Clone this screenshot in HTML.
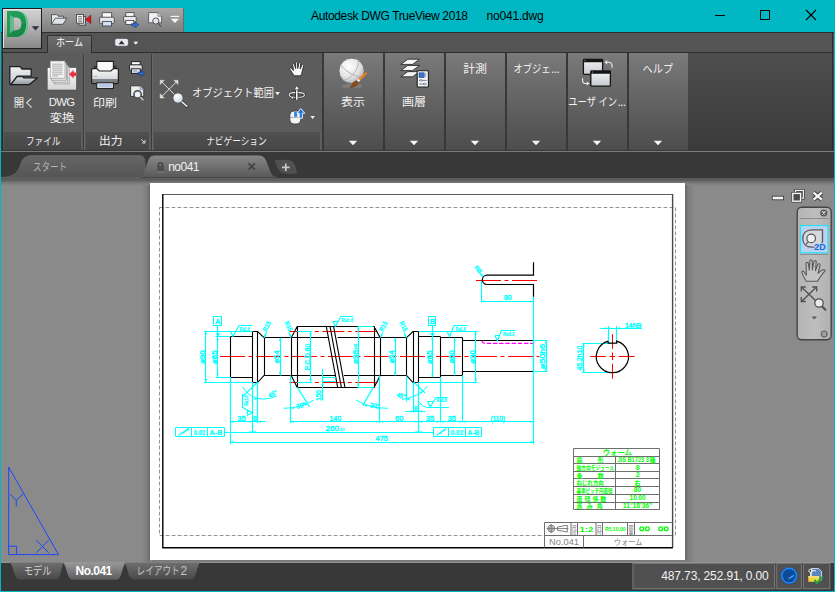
<!DOCTYPE html>
<html lang="ja"><head><meta charset="utf-8"><title>Autodesk DWG TrueView 2018 - no041.dwg</title>
<style>
html,body{margin:0;padding:0;}
body{width:835px;height:592px;position:relative;overflow:hidden;background:#00b7c3;font-family:"Liberation Sans",sans-serif;}
div{position:absolute;box-sizing:border-box;}
svg{position:absolute;overflow:visible;}
svg.ov{left:0;top:0;pointer-events:none;}
</style></head><body>
<div style="left:1px;top:32px;width:832.5px;height:558.5px;background:#3a3a3a;"></div>
<div style="left:1px;top:32px;width:832.5px;height:1px;background:#2e2e2e;"></div>
<div style="left:1px;top:33px;width:832.5px;height:19px;background:#545454;"></div>
<div style="left:1px;top:52px;width:832.5px;height:1px;background:#2c2c2c;"></div>
<div style="left:1px;top:53px;width:832.5px;height:97px;background:linear-gradient(#4e4e4e,#3a3a3a);"></div>
<div style="left:1px;top:150px;width:832.5px;height:1px;background:#3a3a3a;"></div>
<div style="left:1px;top:151px;width:832.5px;height:1px;background:#7a7a7a;"></div>
<div style="left:1px;top:152px;width:832.5px;height:3.5px;background:#383838;"></div>
<div style="left:311px;top:8px;height:16px;line-height:16px;font-size:12px;color:#000;letter-spacing:-0.355px;white-space:pre;">Autodesk DWG TrueView 2018</div>
<div style="left:486.4px;top:8px;height:16px;line-height:16px;font-size:12px;color:#000;letter-spacing:-0.165px;white-space:pre;">no041.dwg</div>
<svg style="left:700px;top:0" width="135" height="32" viewBox="700 0 135 32" fill="none" stroke="#000" stroke-width="1"><path d="M715 15.5H725"/><rect x="760.5" y="10.5" width="9" height="9"/><path d="M806 10L816 20M816 10L806 20" stroke-width="1.1"/></svg>
<div style="left:41.5px;top:8px;width:142px;height:24px;background:linear-gradient(#a9a9a9,#7d7d7d);border-right:1px solid #6a6a6a;"></div>
<div style="left:1.5px;top:8px;width:40.5px;height:40.5px;background:linear-gradient(180deg,#d2d2d2 0%,#c4c4c4 25%,#a8a8a8 60%,#888 100%);border:1px solid #1c1c1c;box-shadow:inset 1px 1px 0 #e6e6e6;"></div>
<svg style="left:0;top:0" width="200" height="56" viewBox="0 0 200 56"><defs><linearGradient id="dg" x1="0" y1="0" x2="1" y2="1"><stop offset="0" stop-color="#23a35a"/><stop offset="1" stop-color="#1b8a49"/></linearGradient></defs><path d="M7 11H15.500C23.500 11 28 16 28 24S23.500 37 15.500 37H7ZM13.400 17.600V30.400H15.200C19.400 30.400 21.400 28.400 21.400 24S19.400 17.600 15.200 17.600Z" fill="url(#dg)" fill-rule="evenodd"/><path d="M10 14.400L13.400 17.600V30.400L10 33.600Z" fill="#79c49a" fill-opacity=".75"/><path d="M7 37L13.400 30.400H15.200C19.400 30.400 21.400 28.400 21.400 24L28 24C28 32 23.500 37 15.500 37Z" fill="#17803f" fill-opacity=".55"/><path d="M17 11.100C24.500 11.600 28 16.400 28 24S24.500 36.400 17 36.900C23 36 26.200 31.500 26.200 24S23 12 17 11.100Z" fill="#63cf96"/><path d="M31.7 26.2H39.3L35.5 30.6Z" fill="#2a3140"/><g stroke="#3c3c3c" stroke-width=".8"><path d="M51.5 24.3V14.6H56.5L58 16.2H63.6V18.2" fill="#e9e9ee"/><path d="M51.5 24.3L55.2 18.2H66.8L63 24.3Z" fill="#dfe3ea"/></g><g stroke="#3a3a3a" stroke-width=".8"><rect x="79" y="16.6" width="6.6" height="8.6" fill="#d8d8d8"/><rect x="76.6" y="14.4" width="6.8" height="8.8" fill="#f4f4f4"/></g><path d="M78 16.5H82M78 18.3H82M78 20.1H82M78 21.7H82" stroke="#555" stroke-width=".7"/><path d="M85.6 19.4L90.8 15.2V23.6Z" fill="#e0161c" stroke="#7a0c10" stroke-width=".6"/><g stroke="#3c3c3c" stroke-width=".8"><path d="M102.2 17.4V12.6H111.6V17.4" fill="#fafafa"/><rect x="99.6" y="17.2" width="14.6" height="6.2" rx="1.2" fill="#e4e6ea"/><rect x="102.4" y="21.4" width="9" height="4.6" fill="#cfe0f6"/></g><g stroke="#3c3c3c" stroke-width=".8"><path d="M125.8 16.6V12.6H134V16.6" fill="#fafafa"/><rect x="123.6" y="16.4" width="12.6" height="5.6" rx="1.1" fill="#e4e6ea"/><rect x="125.8" y="20.4" width="8" height="4" fill="#f4f4f4"/></g><path d="M131.6 23.6H135V21.8L139 24.8L135 27.8V26H131.6Z" fill="#2f6fd0" stroke="#183a78" stroke-width=".5"/><path d="M148.6 12.6H158L161.6 16.2V22.8H148.6Z" fill="#f0f0f0" stroke="#4a4a4a" stroke-width=".8"/><path d="M158 12.6V16.2H161.6" fill="#cfd8e6" stroke="#4a4a4a" stroke-width=".6"/><circle cx="155.8" cy="21" r="3.1" fill="#dfe6ee" stroke="#555" stroke-width="1"/><path d="M158 23.4L161.2 26.8" stroke="#555" stroke-width="1.3"/><path d="M170.6 16.4H179.2" stroke="#f4f4f4" stroke-width="1.2"/><path d="M170.8 18.8H179L174.9 23Z" fill="#f6f6f6"/></svg>
<div style="left:47.2px;top:35.2px;width:45px;height:17.8px;background:linear-gradient(#6b6b6b,#5d5d5d);border:1px solid #303030;border-bottom:none;border-radius:1.5px 1.5px 0 0;"></div>
<svg style="left:110px;top:34px" width="34" height="16" viewBox="110 34 34 16"><rect x="114.8" y="38.4" width="13.6" height="7.8" rx="2.2" fill="#e9e9ef" stroke="#3a3f4c" stroke-width=".6"/><path d="M118.6 44.2L121.6 40.6L124.6 44.2Z" fill="#2a3140"/><path d="M133.4 41.8H138.2L135.8 44.8Z" fill="#f4f4f4"/></svg>
<div style="left:1.5px;top:48.5px;width:1.5px;height:102px;background:#2a2a2a;"></div>
<div style="left:3px;top:53px;width:319px;height:97px;background:#5c5c5c;"></div>
<div style="left:3px;top:132px;width:79.3px;height:17.7px;background:linear-gradient(#505050,#474747);border-left:1px solid #565656;border-right:1px solid #5e5e5e;"></div>
<div style="left:85.3px;top:132px;width:64.7px;height:17.7px;background:linear-gradient(#505050,#474747);border-left:1px solid #565656;border-right:1px solid #5e5e5e;"></div>
<div style="left:153px;top:132px;width:168px;height:17.7px;background:linear-gradient(#505050,#474747);border-left:1px solid #565656;border-right:1px solid #5e5e5e;"></div>
<div style="left:3px;top:149.7px;width:319px;height:0.8px;background:#3a3a3a;"></div>
<div style="left:83.3px;top:54px;width:1px;height:96px;background:#3a3a3a;"></div>
<div style="left:84.3px;top:54px;width:1px;height:96px;background:#686868;"></div>
<div style="left:151px;top:54px;width:1px;height:96px;background:#3a3a3a;"></div>
<div style="left:152px;top:54px;width:1px;height:96px;background:#686868;"></div>
<div style="left:322px;top:53px;width:366px;height:97px;background:#383838;"></div>
<div style="left:48.8px;top:95.15px;height:15.3px;line-height:15.3px;font-size:11.3px;color:#f2f2f2;letter-spacing:-0.708px;white-space:pre;">DWG</div>
<div style="left:324px;top:53px;width:58.5px;height:96.5px;background:linear-gradient(#7a7a7a,#656565 45%,#4d4d4d);"></div>
<svg style="left:348.2px;top:140px" width="10" height="6" viewBox="0 0 10 6"><path d="M0.8 0.8H9.2L5 5.2Z" fill="#f4f4f4"/></svg>
<div style="left:385px;top:53px;width:58.5px;height:96.5px;background:linear-gradient(#7a7a7a,#656565 45%,#4d4d4d);"></div>
<svg style="left:409.2px;top:140px" width="10" height="6" viewBox="0 0 10 6"><path d="M0.8 0.8H9.2L5 5.2Z" fill="#f4f4f4"/></svg>
<div style="left:446px;top:53px;width:58.5px;height:96.5px;background:linear-gradient(#7a7a7a,#656565 45%,#4d4d4d);"></div>
<svg style="left:470.2px;top:140px" width="10" height="6" viewBox="0 0 10 6"><path d="M0.8 0.8H9.2L5 5.2Z" fill="#f4f4f4"/></svg>
<div style="left:507px;top:53px;width:58.5px;height:96.5px;background:linear-gradient(#7a7a7a,#656565 45%,#4d4d4d);"></div>
<svg style="left:531.2px;top:140px" width="10" height="6" viewBox="0 0 10 6"><path d="M0.8 0.8H9.2L5 5.2Z" fill="#f4f4f4"/></svg>
<div style="left:568px;top:53px;width:58.5px;height:96.5px;background:linear-gradient(#7a7a7a,#656565 45%,#4d4d4d);"></div>
<svg style="left:592.2px;top:140px" width="10" height="6" viewBox="0 0 10 6"><path d="M0.8 0.8H9.2L5 5.2Z" fill="#f4f4f4"/></svg>
<div style="left:629px;top:53px;width:58.5px;height:96.5px;background:linear-gradient(#7a7a7a,#656565 45%,#4d4d4d);"></div>
<svg style="left:653.2px;top:140px" width="10" height="6" viewBox="0 0 10 6"><path d="M0.8 0.8H9.2L5 5.2Z" fill="#f4f4f4"/></svg>
<div style="left:551px;top:62px;font-size:12px;line-height:14px;color:#f2f2f2;letter-spacing:-0.6px;">...</div>
<div style="left:617.4px;top:94.6px;font-size:12px;line-height:14px;color:#f2f2f2;letter-spacing:-0.6px;">...</div>
<div style="left:832.3px;top:32px;width:1.2px;height:119px;background:#2a2a2a;"></div>
<svg class="ov" width="835" height="592" viewBox="0 0 835 592"><defs><linearGradient id="fo1" x1="0" y1="0" x2="0" y2="1"><stop offset="0" stop-color="#f0f1f4"/><stop offset="1" stop-color="#c4c8ce"/></linearGradient><linearGradient id="fo2" x1="0" y1="0" x2="0" y2="1"><stop offset="0" stop-color="#dfe2e7"/><stop offset="1" stop-color="#8f969f"/></linearGradient><linearGradient id="wp" x1="0" y1="0" x2="0" y2="1"><stop offset="0" stop-color="#ffffff"/><stop offset="1" stop-color="#d4d4d6"/></linearGradient><linearGradient id="pr1" x1="0" y1="0" x2="0" y2="1"><stop offset="0" stop-color="#fbfbfc"/><stop offset=".68" stop-color="#d6d8dc"/><stop offset=".7" stop-color="#7f8790"/><stop offset="1" stop-color="#6e7680"/></linearGradient><radialGradient id="gl" cx=".38" cy=".32" r=".75"><stop offset="0" stop-color="#ffffff"/><stop offset=".6" stop-color="#e2e2e2"/><stop offset="1" stop-color="#a8a8a8"/></radialGradient><linearGradient id="win" x1="0" y1="0" x2="0" y2="1"><stop offset="0" stop-color="#f2f3f6"/><stop offset="1" stop-color="#c6c9cf"/></linearGradient><radialGradient id="mg" cx=".4" cy=".35" r=".7"><stop offset="0" stop-color="#ffffff"/><stop offset="1" stop-color="#c9d2e2"/></radialGradient></defs><g stroke="#1e1e1e" stroke-width="1.3" stroke-linejoin="round"><path d="M9.800 84.200V66.600H20.200L21.800 69H31.200V76.200H17.400L10.800 84.600Z" fill="url(#fo1)"/><path d="M10.800 84.600L17 76.600H22.600L23.800 77.800H37.600L29.400 84.600Z" fill="url(#fo2)"/></g><rect x="47.200" y="67.600" width="29.200" height="22.400" fill="url(#wp)" stroke="#3c3c3c" stroke-width=".5"/><g fill="#e6e6e6" stroke="#8a8a8a" stroke-width=".6"><rect x="54.400" y="66.800" width="14.800" height="17.200"/><rect x="53" y="65" width="14.800" height="17.200"/><rect x="51.600" y="63" width="14.800" height="17.200"/><rect x="50.200" y="61" width="14.800" height="17.200" fill="#f2f2f2"/></g><path d="M52.200 64.200H62.600M52.200 66.200H62.600M52.200 68.200H62.600M52.200 70.200H62.600M52.200 72.200H62.600M52.200 74.200H62.600M52.200 76H58" stroke="#9a9a9a" stroke-width=".8"/><path d="M69.200 74.200L73.600 69.800V72.400H76.300V76H73.600V78.600Z" fill="#e8303a" stroke="#f08088" stroke-width=".4"/><path d="M94.200 70V66.400H96.600V70M113.500 70V66.400H116V70" fill="#3a3a3a" stroke="#2a2a2a" stroke-width=".8"/><rect x="91.600" y="68.600" width="26.800" height="15" rx="1.600" fill="url(#pr1)" stroke="#1e1e1e" stroke-width="1.200"/><path d="M96.800 68.600V61.400H113.400V68.600L110.800 71H99.400Z" fill="#fafafa" stroke="#1e1e1e" stroke-width="1.100" stroke-linejoin="round"/><path d="M94 76.500H97" stroke="#9aa0a8" stroke-width=".8"/><rect x="96.800" y="82.800" width="16.600" height="5.600" fill="#fafafa" stroke="#1e1e1e" stroke-width="1.100"/><rect x="98.400" y="84" width="13.400" height="3" fill="#b4c8ea"/><g stroke="#1e1e1e" stroke-width="1"><path d="M131.400 65V61.600H140.200V65" fill="#fafafa"/><rect x="129.400" y="64.800" width="12.800" height="5.400" rx="1" fill="#e4e6ea"/><rect x="131.400" y="68.800" width="8.800" height="4.600" fill="#f4f6fa"/></g><rect x="132.600" y="70" width="5" height="2.400" fill="#a8bcd8"/><path d="M138 72.200H141V70.100L144.800 73.400L141 76.800V74.700H138Z" fill="#2e66c0" stroke="#17386e" stroke-width=".6"/><path d="M130.600 85.800H140L143.800 89.400V96.400H130.600Z" fill="#ececec" stroke="#3a3a3a" stroke-width="1"/><path d="M140 85.800V89.400H143.800Z" fill="#c6d4ea" stroke="#6a7a94" stroke-width=".6"/><circle cx="137.600" cy="94.400" r="3.700" fill="#dde4ec" stroke="#4a4a4a" stroke-width="1.500"/><circle cx="137.600" cy="94.400" r="2.400" fill="#eef2f6"/><path d="M140.400 97.200L143.400 100.200" stroke="#c8c8c8" stroke-width="1.400"/><path d="M141.200 139.200L145 143M145 140V143H142" fill="none" stroke="#d8d8d8" stroke-width="1"/><g stroke="#dcdcdc" stroke-width="1" fill="#dcdcdc"><path d="M160.600 80.800L176 96M177.600 80.800L160.600 97.600" fill="none"/><path d="M160.100 80.300H164.300L160.100 84.500ZM178 80.300V84.500L173.800 80.300ZM160.100 98V93.800L164.300 98Z" stroke-width=".5"/></g><path d="M181.600 101.600L187 106.400" stroke="#3a3a3a" stroke-width="3.200" stroke-linecap="round"/><path d="M181.600 101.600L186.800 106.200" stroke="#e6e6e6" stroke-width="1.700" stroke-linecap="round"/><circle cx="178" cy="98" r="5.200" fill="url(#mg)" stroke="#4e525a" stroke-width="1"/><path d="M275.100 92H279.900L277.500 95.200ZM310.300 116H314.900L312.600 118.900Z" fill="#f0f0f0"/><path d="M294.200 75.800C292.600 73.400 291 71 289.900 69.200C289.300 68.200 290.700 67.400 291.500 68.300L293.600 70.600L292.600 64.300C292.400 63.100 294.100 62.800 294.400 64L295.700 68.600L295.600 62.600C295.600 61.400 297.300 61.400 297.400 62.600L297.800 68.400L298.900 62.900C299.100 61.700 300.800 62 300.700 63.200L300.200 68.900L302 64.800C302.500 63.700 304 64.300 303.700 65.500L302.300 71C302 73 301.400 74.600 300.600 75.800Z" fill="#fafafa" stroke="#2a2a2a" stroke-width=".9" stroke-linejoin="round"/><ellipse cx="296.800" cy="94.900" rx="7.600" ry="2.500" fill="none" stroke="#2a2a2a" stroke-width="2.200"/><ellipse cx="296.800" cy="94.900" rx="7.600" ry="2.500" fill="none" stroke="#f2f2f2" stroke-width="1.100"/><path d="M296.800 100V89" stroke="#2a2a2a" stroke-width="3"/><path d="M296.800 99.800V89" stroke="#fafafa" stroke-width="1.600"/><path d="M296.800 85.600L299.600 89.800H294Z" fill="#fafafa" stroke="#2a2a2a" stroke-width=".7"/><path d="M290.400 97.600L293.800 95.600L293.400 99.400Z" fill="#fafafa" stroke="#2a2a2a" stroke-width=".6"/><rect x="289.800" y="111" width="11" height="13" rx="4" fill="#f2f3f6" stroke="#3a3a3a" stroke-width=".9"/><path d="M289.800 117.400H300.800M295.300 111V117.400" stroke="#8a8e96" stroke-width=".7"/><rect x="294.200" y="112" width="3" height="4.600" fill="#2a7fe0"/><path d="M300.800 108.600L304.800 113.200H302.400V118.300H299.200V113.200H296.800Z" fill="#1d7be0" stroke="#f4f8ff" stroke-width=".9" stroke-linejoin="round"/><ellipse cx="352" cy="86" rx="10.500" ry="2.600" fill="#8a8a8a" fill-opacity=".55"/><circle cx="351.600" cy="70.800" r="12.700" fill="url(#gl)" stroke="#6e6e6e" stroke-width="1"/><path d="M340.500 64.600C346 72 356 78 363.400 76.500M358.500 60.300C359.500 68 352 78.500 343.600 80.500" fill="none" stroke="#b4b4b4" stroke-width="1"/><path d="M367.300 73.200L366 71.900L358.600 78.800L360.200 80.400Z" fill="#f08a24" stroke="#b86214" stroke-width=".5"/><path d="M360.200 80.400L358.600 78.800L356.600 80.600L358.300 82.300Z" fill="#f4f4f4" stroke="#9a9a9a" stroke-width=".4"/><path d="M358.300 82.300L356.600 80.600C354.200 81.200 352.400 83 351.800 85.400C351.400 86.600 350.600 87 349.800 87.200C353.400 88 357.400 86.200 358.300 82.300Z" fill="#8c4a1c" stroke="#5e3010" stroke-width=".4"/><g stroke="#2a2a2a" stroke-width=".9" stroke-linejoin="round"><path d="M400.800 76.800L407.800 71.600H419.600L412.600 76.800Z" fill="#f2f2f2"/><path d="M400.800 70.600L407.800 65.400H419.600L412.600 70.600Z" fill="#f6f6f6"/><path d="M400.800 64.400L407.800 59.200H419.600L412.600 64.400Z" fill="#fafafa"/></g><rect x="417.200" y="70.800" width="11.200" height="16.200" rx=".8" fill="#f6f6f8" stroke="#1e1e1e" stroke-width="1.100"/><rect x="419" y="72.800" width="5.200" height="4.800" fill="#3a72d0" stroke="#1d3f86" stroke-width=".5"/><path d="M425.600 72.800V77.600" stroke="#b0b4bc" stroke-width="1.200"/><path d="M419 80.400H426.600M419 84H426.600" stroke="#3a4a66" stroke-width=".7"/><circle cx="421" cy="80.400" r="1" fill="#f6f6f8" stroke="#3a4a66" stroke-width=".5"/><circle cx="424.400" cy="84" r="1" fill="#f6f6f8" stroke="#3a4a66" stroke-width=".5"/><g stroke="#151515" stroke-width="1.300" stroke-linejoin="round"><rect x="583.400" y="59.400" width="19.200" height="15" rx=".8" fill="url(#win)"/><rect x="590.800" y="71" width="19.600" height="15.200" rx=".8" fill="url(#win)"/></g><path d="M583.400 59.400H602.600V62.200H583.400ZM590.800 71H610.400V73.800H590.800Z" fill="#151515"/><path d="M584.600 60.500H585.400M592 72.100H592.800" stroke="#eee" stroke-width=".8"/><g fill="none" stroke="#ececec" stroke-width="1.100"><path d="M612 67.800V65.500C612 63.400 610.600 62.300 608.600 62.300H605.600"/><path d="M582.600 78.200V80.400C582.600 82.400 584 83.500 586 83.500H588.400"/></g><path d="M604.400 62.300L607.200 60.200V64.400ZM589.600 83.500L586.800 81.400V85.600Z" fill="#ececec"/></svg>
<div style="left:1px;top:155.5px;width:832.5px;height:22px;background:#383838;"></div>
<svg style="left:0;top:150px" width="835" height="36" viewBox="0 150 835 36"><defs><linearGradient id="tg1" x1="0" y1="0" x2="0" y2="1"><stop offset="0" stop-color="#666"/><stop offset="1" stop-color="#555"/></linearGradient><linearGradient id="tg2" x1="0" y1="0" x2="0" y2="1"><stop offset="0" stop-color="#888"/><stop offset="1" stop-color="#585858"/></linearGradient></defs><path d="M132 177.500C141 177.500 144 172 146.300 166S149 155.500 154.500 155.500H258C266 155.500 266.500 162 269 168S272 177.500 280 177.500Z" fill="url(#tg2)"/><path d="M1 177.500C14 177.500 18 172 20 166S24 155.500 32 155.500H139Q145 155.500 145 161.500V171.500Q145 177.500 139 177.500Z" fill="url(#tg1)" stroke="#686868" stroke-width=".7"/><path d="M274.600 160C279 159.600 287 159.400 290.500 160.500S296.500 167 297 173.600C292 174 283 174 280.500 172S276.500 165 274.600 160Z" fill="#505050"/><path d="M282 167.300H289.600M285.800 163.500V171.100" stroke="#c8c8c8" stroke-width="1.700"/><path d="M248.600 163.400L254.800 169.600M254.800 163.400L248.600 169.600" stroke="#444" stroke-width="1.800"/><path d="M158.400 166V164.400C158.400 162.400 162.600 162.400 162.600 164.400V166" fill="none" stroke="#3e3e3e" stroke-width="1.300"/><rect x="157.200" y="165.800" width="6.600" height="5.600" fill="#4e4e4e"/><path d="M157 172H164" stroke="#9a9a9a" stroke-width=".6"/></svg>
<div style="left:1px;top:177.5px;width:832.5px;height:3.6px;background:linear-gradient(#5a5a5a,#606060);"></div>
<div style="left:1px;top:181.1px;width:832.5px;height:1px;background:#6c6c6c;"></div>
<div style="left:168.2px;top:158.6px;height:16px;line-height:16px;font-size:12px;color:#f0f0f0;letter-spacing:-0.518px;white-space:pre;">no041</div>
<div style="left:1px;top:182px;width:832.5px;height:380px;background:linear-gradient(#747474,#8a8a8a 4px);"></div>
<div style="left:685px;top:185px;width:10px;height:376.6px;background:linear-gradient(90deg,#686868,#7e7e7e 35%,#8a8a8a);"></div>
<div style="left:152px;top:560px;width:536px;height:1.6px;background:#7c7c7c;"></div>
<div style="left:140.5px;top:185px;width:9.5px;height:376.6px;background:linear-gradient(90deg,#8a8a8a,#7e7e7e 65%,#686868);"></div>
<div style="left:150px;top:183px;width:535px;height:377px;background:#fff;"></div>
<svg class="ov" width="835" height="592" viewBox="0 0 835 592" font-family="Liberation Sans, sans-serif"><path d="M8.7 467.1V554.6H58.5ZM8.7 546.2H16.6V554.6M10 494L16.3 500.1L23.7 493.5M16.3 500.1V506.4M36.4 540.1L48.7 552.8M48.7 540.1L36.4 552.8" fill="none" stroke="#1846ff" stroke-width="1"/><g fill="none" stroke="#ff0000" stroke-width="1"><path d="M220 356.5H539.5M476 280.5H538.7" stroke-dasharray="25 3.5 4 3.5"/><path d="M289.3 331.5H380.2M289.3 382.5H380.2" stroke-dasharray="22 3.5 4 3.5"/><path d="M590.1 356.5H634.7" stroke-dasharray="15.8 3.6 5.6 3.6 16 0"/><path d="M612.5 334.1V378.8" stroke-dasharray="14.8 3.6 7.5 3.6 16 0"/></g><path d="M252.6 336.5L230.5 336.5L230.5 377.5L252.6 377.5M252.5 331.2L252.5 382.2M257.5 331.2L257.5 382.2M252.6 331.5L257.6 331.5L264.1 337.7M252.6 382.5L257.6 382.5L264.1 375.4M264.5 337.7L264.5 375.4M264.1 337.5L291.2 337.5M264.1 375.5L291.2 375.5M291.5 337.7L291.5 375.4M291.2 337.7L297.2 326.5L374.1 326.5L380.2 337.7M291.2 375.4L297.2 387.5L374.1 387.5L380.2 375.4M380.5 337.7L380.5 375.4M297.5 326.3L297.5 387.1M374.5 326.3L374.5 387.1M291.2 337.5L329 337.5M337.6 337.5L380.2 337.5M291.2 375.5L335.4 375.5M344 375.5L380.2 375.5M326.3 326.3L337.6 387.1M330 326.3L341.3 387.1M333.6 326.3L344.9 387.1M380.2 337.5L406.5 337.5L406.5 375.5L380.2 375.5M406.5 337.7L413 331.5L418.7 331.5M406.5 375.4L413 382.5L418.7 382.5M413.5 331.2L413.5 382.2M418.5 331.2L418.5 382.2M418.7 336.5L440.3 336.5M418.7 377.5L440.3 377.5M440.5 336.6L440.5 377.2M440.3 337.5L462.6 337.5M440.3 375.5L462.6 375.5M462.5 337.7L462.5 375.4M462.6 340.5L533.5 340.5L533.5 371.5L462.6 371.5" fill="none" stroke="#000" stroke-width="1.1"/><path d="M482 340.5Q482.4 343.3 485.2 343.3H532.8" fill="none" stroke="#ff00ff" stroke-width="1.25" stroke-dasharray="4.4 1.8"/><path d="M217.5 325.9L217.5 336.6M204 331.5L252.6 331.5M204 382.5L252.6 382.5M215.7 336.5L230.4 336.5M215.7 377.5L230.4 377.5M205.5 331.2L205.5 382.2M217.5 336.6L217.5 377.2M230.5 331.5L235.5 331.5M230.5 331.6L233 336.6L239 325.5L252.2 325.5M264.1 337.7L266.6 332.3M291.2 337.7L288.7 332.3M380.2 337.7L382.9 332.4M406.5 337.7L403.8 332.4M280.5 337.7L280.5 375.4M297.2 331.5L312.3 331.5M297.2 382.5L312.3 382.5M310.5 331.2L310.5 382.2M357.6 326.5L373.4 326.5M357.6 387.5L373.4 387.5M358.5 326.3L358.5 387.1M332.8 321.5L337.8 321.5M332.8 321.3L335.3 326.3L341 316.5L353.3 316.5M395.5 337.7L395.5 375.4M322.5 369L322.5 400.6M322.4 377.5L336 377.5M323 381.5L335.6 381.5M432.5 325.9L432.5 336.6M432.5 336.6L432.5 377.2M418.7 331.5L477.7 331.5M418.7 382.5L477.7 382.5M475.5 331.2L475.5 382M454.5 337.7L454.5 375.4M447.1 331.5L452.1 331.5M447.1 331.6L449.6 336.6L454 325.5L467.6 325.5M494.9 335.5L499.9 335.5M494.9 335.5L497.4 340.5L501.4 330.5L515.5 330.5M533.4 340.5L547.4 340.5M533.4 371.5L547.4 371.5M546.5 340.3L546.5 371.9M230.5 377.2L230.5 444.3M252.5 382.2L252.5 432.5M257.5 382.2L257.5 423M290.5 375.4L290.5 423.1M379.5 375.4L379.5 423M418.5 382.2L418.5 432.5M440.5 377.2L440.5 422.6M462.5 375.4L462.5 422.6M533.5 296.7L533.5 444.3M413.5 382.2L413.5 412.4M406.5 375.4L406.5 401.6M230.4 421.5L252.6 421.5M252.6 421.5L265.6 421.5M290.6 421.5L379.8 421.5M379.8 421.5L418.7 421.5M418.7 421.5L440.3 421.5M440.3 421.5L462.6 421.5M462.6 421.5L533.5 421.5M224.9 432.5L433.1 432.5M230.4 442.5L533.5 442.5M178.5 435.2L189.1 428.6M436.5 435.2L446.1 428.6M405.1 411.5L425.2 411.5M257.9 381.8L242.6 396.6M247.5 410.2L247.5 415.2L252.6 412.7L247.6 410.2L242.5 407.3L242.5 393.7M297.2 387.1L309.5 406.6M373.4 387.1L362.6 405.9M413.7 382.2L425.2 393M426.6 407.5L448.9 407.5M427.4 401.5L433.1 401.5M427.4 401.6L430.2 407L436 397.5L447.5 397.5M481.5 281L481.5 302.5M481.5 301.5L533.5 301.5M477.5 270.3L483.6 277.4M608.5 325.9L608.5 342.4M616.5 325.9L616.5 342.4M600.2 328.5L641.9 328.5M582.2 343.5L611.7 343.5M582.2 372.5L611.7 372.5M583.5 343.1L583.5 372.4" fill="none" stroke="#00ffff" stroke-width="1.15"/><path d="M218 336.6L215.7 333.2L220.3 333.2ZM205.9 331.2L207.1 334.6L204.8 334.6ZM205.9 382.2L204.8 378.8L207.1 378.8ZM217.7 336.6L218.8 340L216.5 340ZM217.7 377.2L216.5 373.8L218.8 373.8ZM264.1 337.7L264.6 334.2L266.4 335ZM291.2 337.7L288.9 335L290.7 334.2ZM380.2 337.7L380.9 334.2L382.6 335.1ZM406.5 337.7L404.1 335.1L405.8 334.2ZM280 337.7L281.1 341.1L278.9 341.1ZM280 375.4L278.9 372L281.1 372ZM310.6 331.2L311.8 334.6L309.5 334.6ZM310.6 382.2L309.5 378.8L311.8 378.8ZM358.3 326.3L359.4 329.7L357.2 329.7ZM358.3 387.1L357.2 383.7L359.4 383.7ZM395 337.7L396.1 341.1L393.9 341.1ZM395 375.4L393.9 372L396.1 372ZM322.4 387.1L321.3 383.9L323.4 383.9ZM432.5 336.6L429.9 333.2L435.1 333.2ZM432.4 336.6L433.5 340L431.2 340ZM432.4 377.2L431.2 373.8L433.5 373.8ZM475.8 331.2L476.9 334.6L474.7 334.6ZM475.8 382L474.7 378.6L476.9 378.6ZM454.7 337.7L455.8 341.1L453.6 341.1ZM454.7 375.4L453.6 372L455.8 372ZM546 340.3L547.1 343.7L544.9 343.7ZM546 371.9L544.9 368.5L547.1 368.5ZM230.4 421.7L233.8 420.6L233.8 422.8ZM252.6 421.7L249.2 422.8L249.2 420.6ZM257.7 421.7L261.1 420.6L261.1 422.8ZM290.6 421.7L294 420.6L294 422.8ZM379.8 421.7L376.4 422.8L376.4 420.6ZM379.8 421.7L383.2 420.6L383.2 422.8ZM418.7 421.7L415.3 422.8L415.3 420.6ZM418.7 421.7L422.1 420.6L422.1 422.8ZM440.3 421.7L436.9 422.8L436.9 420.6ZM440.3 421.7L443.7 420.6L443.7 422.8ZM462.6 421.7L459.2 422.8L459.2 420.6ZM462.6 421.7L466 420.6L466 422.8ZM533.5 421.7L530.1 422.8L530.1 420.6ZM252.6 432L249.4 433.1L249.4 430.9ZM252.6 432L255.8 430.9L255.8 433.1ZM418.7 432L415.5 433.1L415.5 430.9ZM418.7 432L421.9 430.9L421.9 433.1ZM230.4 442.1L233.8 441L233.8 443.2ZM533.5 442.1L530.1 443.2L530.1 441ZM189.1 428.6L186.9 431.7L185.6 429.9ZM185.9 431L183.7 434.1L182.4 432.3ZM446.1 428.6L443.9 431.7L442.6 429.9ZM442.9 431L440.7 434.1L439.4 432.3ZM413.3 411.4L410.1 412.4L410.1 410.3ZM418.7 411.4L421.9 410.3L421.9 412.4ZM257.7 399L254.5 400.1L254.5 397.9ZM290.6 408.1L293.8 407.1L293.8 409.2ZM308 403.6L305.8 406.1L304.7 404.3ZM364 404.4L367.3 405.1L366.2 406.9ZM379.8 408.1L376.6 409.2L376.6 407.1ZM406.5 398.8L409.8 398.3L409.5 400.4ZM423 391L421.5 394L420 392.5ZM481.5 301.3L484.9 300.2L484.9 302.4ZM533.5 301.3L530.1 302.4L530.1 300.2ZM483.6 277.4L480.4 275.4L482.1 274ZM608.1 328.3L604.9 329.4L604.9 327.2ZM616.7 328.3L619.9 327.2L619.9 329.4ZM583.7 343.1L584.9 346.5L582.6 346.5ZM583.7 372.4L582.6 369L584.9 369Z" fill="#00ffff"/><rect x="159.5" y="207.5" width="516" height="328" fill="none" stroke="#929292" stroke-width="1" stroke-dasharray="3.8 2.2"/><path d="M162.8 194.5H672.5" fill="none" stroke="#5c5c5c" stroke-width="1"/><path d="M672.6 194V547.7" fill="none" stroke="#4a4a4a" stroke-width="1.4"/><path d="M162.8 194.1V547.7H672.8" fill="none" stroke="#000" stroke-width="1.4"/><rect x="213.5" y="316.5" width="8" height="9" fill="none" stroke="#00ffff"/><text transform="translate(217.6 323.8)" text-anchor="middle" font-size="7.2" fill="#00ffff" stroke="#00ffff" stroke-width="0.4">A</text><text transform="translate(204.9 357) rotate(-90)" text-anchor="middle" font-size="6.3" fill="#00ffff" stroke="#00ffff" stroke-width="0.4" textLength="13.5" lengthAdjust="spacingAndGlyphs">ø90</text><text transform="translate(216.7 357.2) rotate(-90)" text-anchor="middle" font-size="6.3" fill="#00ffff" stroke="#00ffff" stroke-width="0.4" textLength="13.5" lengthAdjust="spacingAndGlyphs">ø65</text><text transform="translate(244.8 331)" text-anchor="middle" font-size="6.2" fill="#00ffff" stroke="#00ffff" stroke-width="0.2" font-weight="bold" textLength="10.4" lengthAdjust="spacingAndGlyphs">Ra1.6</text><text transform="translate(268.8 327.2) rotate(-65)" text-anchor="middle" font-size="6.6" fill="#00ffff" stroke="#00ffff" stroke-width="0.2" font-weight="bold" textLength="10.5" lengthAdjust="spacingAndGlyphs">R15</text><text transform="translate(286.5 327.2) rotate(65)" text-anchor="middle" font-size="6.6" fill="#00ffff" stroke="#00ffff" stroke-width="0.2" font-weight="bold" textLength="10.5" lengthAdjust="spacingAndGlyphs">R15</text><text transform="translate(385.2 327.4) rotate(-63)" text-anchor="middle" font-size="6.6" fill="#00ffff" stroke="#00ffff" stroke-width="0.2" font-weight="bold" textLength="10.5" lengthAdjust="spacingAndGlyphs">R15</text><text transform="translate(401.5 327.4) rotate(63)" text-anchor="middle" font-size="6.6" fill="#00ffff" stroke="#00ffff" stroke-width="0.2" font-weight="bold" textLength="10.5" lengthAdjust="spacingAndGlyphs">R15</text><text transform="translate(278.9 356.8) rotate(-90)" text-anchor="middle" font-size="6.3" fill="#00ffff" stroke="#00ffff" stroke-width="0.4" textLength="13" lengthAdjust="spacingAndGlyphs">ø54</text><text transform="translate(309.6 357) rotate(-90)" text-anchor="middle" font-size="6.4" fill="#00ffff" stroke="#00ffff" stroke-width="0.4" textLength="26.5" lengthAdjust="spacingAndGlyphs">P.C.D.80</text><text transform="translate(357.7 357) rotate(-90)" text-anchor="middle" font-size="6.3" fill="#00ffff" stroke="#00ffff" stroke-width="0.4" textLength="14" lengthAdjust="spacingAndGlyphs">ø96</text><text transform="translate(357.2 346.8) rotate(-90)" text-anchor="middle" font-size="3.6" fill="#00ffff" stroke="#00ffff" stroke-width="0.4" textLength="6" lengthAdjust="spacingAndGlyphs">-0.05</text><text transform="translate(347.3 321.6)" text-anchor="middle" font-size="6.2" fill="#00ffff" stroke="#00ffff" stroke-width="0.2" font-weight="bold" textLength="11.4" lengthAdjust="spacingAndGlyphs">Ra1.6</text><text transform="translate(394.1 356.8) rotate(-90)" text-anchor="middle" font-size="6.3" fill="#00ffff" stroke="#00ffff" stroke-width="0.4" textLength="13" lengthAdjust="spacingAndGlyphs">ø54</text><text transform="translate(321.4 395.4) rotate(-90)" text-anchor="middle" font-size="6.6" fill="#00ffff" stroke="#00ffff" stroke-width="0.4" textLength="10.6" lengthAdjust="spacingAndGlyphs">150</text><rect x="428.5" y="316.5" width="7" height="9" fill="none" stroke="#00ffff"/><text transform="translate(432.3 323.8)" text-anchor="middle" font-size="7.2" fill="#00ffff" stroke="#00ffff" stroke-width="0.4">B</text><text transform="translate(431.6 357.2) rotate(-90)" text-anchor="middle" font-size="6.3" fill="#00ffff" stroke="#00ffff" stroke-width="0.4" textLength="13.5" lengthAdjust="spacingAndGlyphs">ø65</text><text transform="translate(474.8 356.9) rotate(-90)" text-anchor="middle" font-size="6.3" fill="#00ffff" stroke="#00ffff" stroke-width="0.4" textLength="13.5" lengthAdjust="spacingAndGlyphs">ø90</text><text transform="translate(453.7 356.8) rotate(-90)" text-anchor="middle" font-size="6.3" fill="#00ffff" stroke="#00ffff" stroke-width="0.4" textLength="13.5" lengthAdjust="spacingAndGlyphs">ø60</text><text transform="translate(460.5 330.7)" text-anchor="middle" font-size="6.2" fill="#00ffff" stroke="#00ffff" stroke-width="0.2" font-weight="bold" textLength="10.2" lengthAdjust="spacingAndGlyphs">Ra1.6</text><text transform="translate(508.7 335.6)" text-anchor="middle" font-size="5.8" fill="#00ffff" stroke="#00ffff" stroke-width="0.2" font-weight="bold" textLength="11.4" lengthAdjust="spacingAndGlyphs">Ra3.2</text><text transform="translate(545.2 356.4) rotate(-90)" text-anchor="middle" font-size="6.8" fill="#00ffff" stroke="#00ffff" stroke-width="0.4" textLength="25" lengthAdjust="spacingAndGlyphs">ø50h6</text><text transform="translate(241.5 420.8)" text-anchor="middle" font-size="7.6" fill="#00ffff" stroke="#00ffff" stroke-width="0.4" textLength="8.6" lengthAdjust="spacingAndGlyphs">35</text><text transform="translate(254.9 420.8)" text-anchor="middle" font-size="6.6" fill="#00ffff" stroke="#00ffff" stroke-width="0.4">8</text><text transform="translate(335.2 420.8)" text-anchor="middle" font-size="7.4" fill="#00ffff" stroke="#00ffff" stroke-width="0.4" textLength="11.6" lengthAdjust="spacingAndGlyphs">140</text><text transform="translate(399.3 420.8)" text-anchor="middle" font-size="7.4" fill="#00ffff" stroke="#00ffff" stroke-width="0.4" textLength="8.4" lengthAdjust="spacingAndGlyphs">60</text><text transform="translate(430 420.8)" text-anchor="middle" font-size="7.4" fill="#00ffff" stroke="#00ffff" stroke-width="0.4" textLength="8.6" lengthAdjust="spacingAndGlyphs">35</text><text transform="translate(451.8 420.8)" text-anchor="middle" font-size="7.4" fill="#00ffff" stroke="#00ffff" stroke-width="0.4" textLength="8.6" lengthAdjust="spacingAndGlyphs">35</text><text transform="translate(497.8 420.8)" text-anchor="middle" font-size="7.4" fill="#00ffff" stroke="#00ffff" stroke-width="0.4" textLength="14.4" lengthAdjust="spacingAndGlyphs">(110)</text><text transform="translate(332.2 431.2)" text-anchor="middle" font-size="7.6" fill="#00ffff" stroke="#00ffff" stroke-width="0.4" textLength="13.6" lengthAdjust="spacingAndGlyphs">260</text><text transform="translate(342.2 431.4)" text-anchor="middle" font-size="3.4" fill="#00ffff" stroke="#00ffff" stroke-width="0.2" font-weight="bold" textLength="5" lengthAdjust="spacingAndGlyphs">-0.1</text><text transform="translate(381.7 441.2)" text-anchor="middle" font-size="7.4" fill="#00ffff" stroke="#00ffff" stroke-width="0.4" textLength="12.2" lengthAdjust="spacingAndGlyphs">475</text><path d="M175.5 427.5H224.5V436.5H175.5ZM191.5 427.5V436.5M207.5 427.5V436.5" fill="none" stroke="#00ffff"/><text transform="translate(199.5 434.9)" text-anchor="middle" font-size="6.8" fill="#00ffff" stroke="#00ffff" stroke-width="0.2" font-weight="bold" textLength="11.4" lengthAdjust="spacingAndGlyphs">0.02</text><text transform="translate(216 434.9)" text-anchor="middle" font-size="6.8" fill="#00ffff" stroke="#00ffff" stroke-width="0.2" font-weight="bold" textLength="12.8" lengthAdjust="spacingAndGlyphs">A-B</text><path d="M433.5 427.5H481.5V436.5H433.5ZM448.5 427.5V436.5M465.5 427.5V436.5" fill="none" stroke="#00ffff"/><text transform="translate(457 434.9)" text-anchor="middle" font-size="6.8" fill="#00ffff" stroke="#00ffff" stroke-width="0.2" font-weight="bold" textLength="12.4" lengthAdjust="spacingAndGlyphs">0.02</text><text transform="translate(473.5 434.9)" text-anchor="middle" font-size="6.8" fill="#00ffff" stroke="#00ffff" stroke-width="0.2" font-weight="bold" textLength="11.8" lengthAdjust="spacingAndGlyphs">A-B</text><text transform="translate(415.9 410.6)" text-anchor="middle" font-size="6.6" fill="#00ffff" stroke="#00ffff" stroke-width="0.4">8</text><path d="M242.500 386.500Q248.500 398.200 262.500 399.200Q270 399.200 276.500 396" fill="none" stroke="#00ffff"/><text transform="translate(273.8 395.8) rotate(-28)" text-anchor="middle" font-size="6.6" fill="#00ffff" stroke="#00ffff" stroke-width="0.4" textLength="9" lengthAdjust="spacingAndGlyphs">45°</text><text transform="translate(247.6 400.6) rotate(-90)" text-anchor="middle" font-size="5.4" fill="#00ffff" stroke="#00ffff" stroke-width="0.2" font-weight="bold" textLength="10.5" lengthAdjust="spacingAndGlyphs">Ra1.6</text><path d="M283.600 408.300Q300 408.300 313.800 400.100M356.200 400.100Q370 408.300 387.800 408.300" fill="none" stroke="#00ffff"/><text transform="translate(301.4 407.6) rotate(-14)" text-anchor="middle" font-size="6.6" fill="#00ffff" stroke="#00ffff" stroke-width="0.4" textLength="9.6" lengthAdjust="spacingAndGlyphs">30°</text><text transform="translate(374.3 408) rotate(10)" text-anchor="middle" font-size="6.6" fill="#00ffff" stroke="#00ffff" stroke-width="0.4" textLength="9.6" lengthAdjust="spacingAndGlyphs">30°</text><path d="M402 399.400Q418.500 397.500 427.700 386" fill="none" stroke="#00ffff"/><text transform="translate(400.4 398) rotate(18)" text-anchor="middle" font-size="6.6" fill="#00ffff" stroke="#00ffff" stroke-width="0.4" textLength="8.6" lengthAdjust="spacingAndGlyphs">45°</text><path d="M419.500 402.300Q422 406.800 426.600 407.300" fill="none" stroke="#00ffff"/><text transform="translate(441.8 401.8)" text-anchor="middle" font-size="5.2" fill="#00ffff" stroke="#00ffff" stroke-width="0.2" font-weight="bold" textLength="10.5" lengthAdjust="spacingAndGlyphs">Ra1.6</text><path d="M533.500 262.200V275.200H487A4.650 4.650 0 0 0 487 284.500H533.500V296.700" fill="none" stroke="#000" stroke-width="1.200"/><text transform="translate(507.7 300.4)" text-anchor="middle" font-size="6.8" fill="#00ffff" stroke="#00ffff" stroke-width="0.4" textLength="7.6" lengthAdjust="spacingAndGlyphs">80</text><text transform="translate(476.6 270.6) rotate(48)" text-anchor="middle" font-size="6" fill="#00ffff" stroke="#00ffff" stroke-width="0.2" font-weight="bold" textLength="8" lengthAdjust="spacingAndGlyphs">R8</text><path d="M608.100 341.100V343.100H616.700V341.100A16.100 16.100 0 1 1 608.100 341.100" fill="none" stroke="#000" stroke-width="1.200"/><text transform="translate(633.2 327.6)" text-anchor="middle" font-size="6.6" fill="#00ffff" stroke="#00ffff" stroke-width="0.4" textLength="16.4" lengthAdjust="spacingAndGlyphs">14N9</text><text transform="translate(582.3 358.1) rotate(-90)" text-anchor="middle" font-size="6.8" fill="#00ffff" stroke="#00ffff" stroke-width="0.4" textLength="25" lengthAdjust="spacingAndGlyphs">45.2h10</text><path d="M573.5 448.5H659.5V509.5H573.5ZM615.5 456.5V509.5M573.5 456.5H659.5M573.5 463.5H659.5M573.5 471.5H659.5M573.5 478.5H659.5M573.5 486.5H659.5M573.5 494.5H659.5M573.5 502.5H659.5" fill="none" stroke="#6e6e6e"/><text x="633.2" y="462" text-anchor="middle" font-size="7" font-weight="bold" fill="#00ff00" textLength="31.6" lengthAdjust="spacingAndGlyphs">JIS B1723 3</text><text x="637.6" y="469.6" text-anchor="middle" font-size="7" font-weight="bold" fill="#00ff00">8</text><text x="637.6" y="477.2" text-anchor="middle" font-size="7" font-weight="bold" fill="#00ff00">2</text><text x="637.6" y="492.4" text-anchor="middle" font-size="7" font-weight="bold" fill="#00ff00" textLength="7.6" lengthAdjust="spacingAndGlyphs">80</text><text x="637.6" y="500.2" text-anchor="middle" font-size="7" font-weight="bold" fill="#00ff00" textLength="16" lengthAdjust="spacingAndGlyphs">10.00</text><text x="637.6" y="508" text-anchor="middle" font-size="7" font-weight="bold" fill="#00ff00" textLength="29.5" lengthAdjust="spacingAndGlyphs">11°18'36"</text><path d="M544.5 547.7V522.5H672.3M544.5 535.5H672.3M571 522.5V535.5M577.5 522.5V535.5M596 522.5V535.5M602.5 522.5V535.5M627.5 522.5V535.5M634.5 522.5V535.5M583.5 535.5V547.7" fill="none" stroke="#6e6e6e"/><text x="564" y="544.9" text-anchor="middle" font-size="9.2" fill="#858585" textLength="30" lengthAdjust="spacingAndGlyphs">No.041</text><g fill="none" stroke="#707070" stroke-width=".9"><circle cx="551.2" cy="528.6" r="2"/><circle cx="551.2" cy="528.6" r="3.5"/><path d="M546.6 528.6H568.4M551.2 524V533.2M557.5 527V530.2L567.3 532V525.2Z"/></g><text x="586.4" y="531.8" text-anchor="middle" font-size="8" font-weight="bold" fill="#00ff00" textLength="13.8" lengthAdjust="spacingAndGlyphs">1:2</text><text x="615.3" y="531.4" text-anchor="middle" font-size="6" font-weight="bold" fill="#00ff00" textLength="20.8" lengthAdjust="spacingAndGlyphs">R5,10,00</text><g fill="none" stroke="#00ff00" stroke-width="1.3"><circle cx="641.8" cy="528.8" r="1.9"/><circle cx="647.4" cy="528.8" r="1.9"/><circle cx="660.6" cy="528.8" r="1.9"/><circle cx="666.2" cy="528.8" r="1.9"/></g></svg>
<svg class="ov" width="835" height="592" viewBox="0 0 835 592"><defs><linearGradient id="nb" x1="0" y1="0" x2="1" y2="0"><stop offset="0" stop-color="#b4b4b4"/><stop offset=".5" stop-color="#bebebe"/><stop offset="1" stop-color="#b0b0b0"/></linearGradient></defs><rect x="772.2" y="196.2" width="11.4" height="3.6" fill="#f4f4f4" stroke="#3a3a3a" stroke-width=".8"/><rect x="795.6" y="190.4" width="7.8" height="7.8" fill="#8a8a8a" stroke="#3a3a3a" stroke-width="2.6"/><rect x="795.6" y="190.4" width="7.8" height="7.8" fill="none" stroke="#f4f4f4" stroke-width="1.2"/><rect x="792.8" y="193.4" width="7.8" height="7.8" fill="#8a8a8a" stroke="#3a3a3a" stroke-width="2.6"/><rect x="792.8" y="193.4" width="7.8" height="7.8" fill="#4a4a4a" stroke="#f4f4f4" stroke-width="1.4"/><path d="M813.6 192.600L821.800 199.600M821.800 192.600L813.600 199.600" stroke="#3a3a3a" stroke-width="4.200"/><path d="M813.600 192.600L821.800 199.600M821.800 192.600L813.600 199.600" stroke="#f6f6f6" stroke-width="2.400"/><rect x="797.2" y="207.200" width="34" height="132.600" rx="4.500" fill="url(#nb)" stroke="#454545" stroke-width="1.400"/><path d="M799.500 218.500H829M800 254.500H828" stroke="#8c8c8c" stroke-width="1"/><circle cx="823.800" cy="213" r="3.600" fill="#555"/><path d="M822.200 211.400L825.400 214.600M825.400 211.400L822.200 214.600" stroke="#f0f0f0" stroke-width="1.100"/><rect x="800.600" y="225.600" width="27.400" height="27.200" fill="#bcd2ee" stroke="#18e6ff" stroke-width="1.100"/><path d="M812 229.800H822.500V241.500C822.500 246.500 817 247.200 812 247.200C806 247.200 802.800 243.500 802.800 238.500S806 229.800 812 229.800Z" fill="#d6d8dc" stroke="#56585c" stroke-width="1.300"/><circle cx="811.200" cy="238.400" r="4.300" fill="#eef0f4" stroke="#56585c" stroke-width="1.200"/><path d="M808.400 241.600L805.600 244.600" stroke="#56585c" stroke-width="1.200"/><text x="814.300" y="249.800" font-family="Liberation Sans, sans-serif" font-size="8.600" font-weight="bold" fill="#1667d9" stroke="#bcd2ee" stroke-width="1.600" paint-order="stroke" textLength="11.400" lengthAdjust="spacingAndGlyphs">2D</text><path d="M806.200 281.300C804.400 278.500 803 275.200 801.900 272.600C801.500 271.300 803.200 270.600 804 271.800L806.400 275.200L806 263.600C806 262 808.200 262 808.400 263.600L809.300 270.200L809.800 261C809.900 259.400 812.100 259.400 812.200 261L812.400 270L813.900 261.600C814.200 260 816.300 260.300 816.200 261.900L815.500 270.600L817.800 264.600C818.400 263.100 820.300 263.800 820 265.300L818 273.500C819.500 271.600 821.500 269.800 823.600 269.600C825.200 269.500 825.400 271 824.300 271.800C821.500 274 820 278 817.400 281.300Z" fill="#c4c4c4" stroke="#5a5a5a" stroke-width="1.100" stroke-linejoin="round"/><g stroke="#505050" stroke-width="1.300" fill="none"><path d="M802 287.500L816 301M816 287.500L802 301"/><path d="M801.300 291.500V287H805.800M812.200 287H816.700V291.500M801.300 297V301.500H805.800"/></g><circle cx="819" cy="303" r="4.200" fill="#e8ecf0" stroke="#505050" stroke-width="1.300"/><path d="M822 306.200L826 310.400" stroke="#505050" stroke-width="2"/><path d="M811.600 316.600H817L814.300 319.400Z" fill="#5a5a5a"/><circle cx="824.200" cy="334" r="3.500" fill="#6a6a6a"/><path d="M822.400 333H826M822.400 335H826" stroke="#e8e8e8" stroke-width=".9"/></svg>
<div style="left:1px;top:561.6px;width:832.5px;height:1px;background:#949494;"></div>
<div style="left:1px;top:562.6px;width:832.5px;height:28px;background:#383838;"></div>
<div style="left:632px;top:562.6px;width:199px;height:27.6px;background:#484848;"></div>
<svg style="left:0;top:556px" width="835" height="36" viewBox="0 556 835 36"><defs><linearGradient id="bg1" x1="0" y1="0" x2="0" y2="1"><stop offset="0" stop-color="#6e6e6e"/><stop offset="1" stop-color="#494949"/></linearGradient><linearGradient id="bg2" x1="0" y1="0" x2="0" y2="1"><stop offset="0" stop-color="#989898"/><stop offset="1" stop-color="#5c5c5c"/></linearGradient></defs><path d="M9.500 562.600H64C62 565 61.500 571 60 575S57 579.500 53 579.500H21C17 579.500 15.800 578 14.500 574S12.500 565 9.500 562.600Z" fill="url(#bg1)"/><path d="M124 562.600H200C198 565 197 571 195.500 575S192.500 579.500 189 579.500H135C131 579.500 130 578 128.600 574S126.600 565 124 562.600Z" fill="url(#bg1)"/><path d="M63 562.600H125.500C123.500 565 122.500 571 121 575S118.500 579.700 115 579.700H73.500C70 579.700 69 578 67.600 574S65.500 565 63 562.600Z" fill="url(#bg2)"/><g fill="#505050" stroke="#747474" stroke-width="1"><rect x="633" y="563.500" width="141.500" height="25"/><rect x="776.700" y="563.500" width="24.600" height="25"/><rect x="803.500" y="563.500" width="26.200" height="25"/></g><circle cx="789.200" cy="575.700" r="8.800" fill="#0a4a96" fill-opacity=".45"/><circle cx="789.200" cy="575.700" r="7.400" fill="#0b4c98" stroke="#1f86ff" stroke-width="1.500"/><path d="M788.600 578.800L793.800 575.400" stroke="#4da3ff" stroke-width="1.300"/><path d="M811.500 568.500H818.500L821.500 571.500V580H811.500Z" fill="#5a86bd" stroke="#e8eef6" stroke-width=".8"/><path d="M808.300 576.200H819V581.800H808.300Z" fill="#f3d23c"/><path d="M808.300 576.200H819V577.600H808.300Z" fill="#f8e688"/><circle cx="810.600" cy="570.800" r="1.700" fill="none" stroke="#fff" stroke-width=".9"/><path d="M810.600 572.500V576M812.300 570.800H816" stroke="#fff" stroke-width=".9"/><path d="M814.500 580L817 583L822.800 576.600" fill="none" stroke="#22a83a" stroke-width="2"/></svg>
<div style="left:180.4px;top:562.6px;height:16px;line-height:16px;font-size:12px;color:#c4c4c4;letter-spacing:0.000px;white-space:pre;">2</div>
<div style="left:75.6px;top:562.6px;height:16px;line-height:16px;font-size:12px;color:#fff;letter-spacing:-0.550px;white-space:pre;font-weight:bold;">No.041</div>
<div style="left:661.3px;top:567.6px;height:16px;line-height:16px;font-size:12px;color:#f2f2f2;letter-spacing:-0.137px;white-space:pre;">487.73, 252.91, 0.00</div>
<svg class="ov" width="835" height="592" viewBox="0 0 835 592" font-family="'Liberation Sans', 'Noto Sans CJK JP', sans-serif">
<text x="56" y="46.4" font-size="10" fill="#fff" textLength="27" lengthAdjust="spacingAndGlyphs">ホーム</text>
<text x="13.8" y="107.3" font-size="11.3" fill="#f2f2f2" textLength="20.8" lengthAdjust="spacingAndGlyphs">開く</text>
<text x="49.8" y="122" font-size="11.3" fill="#f2f2f2" textLength="24.6" lengthAdjust="spacingAndGlyphs">変換</text>
<text x="93" y="107.3" font-size="11.3" fill="#f2f2f2" textLength="24" lengthAdjust="spacingAndGlyphs">印刷</text>
<text x="26" y="145" font-size="10.5" fill="#f2f2f2" textLength="34.5" lengthAdjust="spacingAndGlyphs">ファイル</text>
<text x="99" y="145.1" font-size="11.3" fill="#f2f2f2" textLength="23.5" lengthAdjust="spacingAndGlyphs">出力</text>
<text x="192" y="97.3" font-size="11.3" fill="#f2f2f2" textLength="82" lengthAdjust="spacingAndGlyphs">オブジェクト範囲</text>
<text x="206.2" y="145" font-size="10.5" fill="#f2f2f2" textLength="60.5" lengthAdjust="spacingAndGlyphs">ナビゲーション</text>
<text x="341" y="105.6" font-size="11.3" fill="#f2f2f2" textLength="23.8" lengthAdjust="spacingAndGlyphs">表示</text>
<text x="402" y="105.6" font-size="11.3" fill="#f2f2f2" textLength="24" lengthAdjust="spacingAndGlyphs">画層</text>
<text x="463.2" y="73.4" font-size="11.3" fill="#f2f2f2" textLength="23.8" lengthAdjust="spacingAndGlyphs">計測</text>
<text x="513.5" y="73.4" font-size="11.3" fill="#f2f2f2" textLength="37" lengthAdjust="spacingAndGlyphs">オブジェ</text>
<text x="568.2" y="106" font-size="11.3" fill="#f2f2f2" textLength="49" lengthAdjust="spacingAndGlyphs" xml:space="preserve">ユーザ イン</text>
<text x="642.6" y="73.4" font-size="11.3" fill="#f2f2f2" textLength="30.5" lengthAdjust="spacingAndGlyphs">ヘルプ</text>
<text x="33" y="171.3" font-size="10.8" fill="#b4b4b4" textLength="34" lengthAdjust="spacingAndGlyphs">スタート</text>
<text x="602.8" y="454.9" font-size="6.5" font-weight="bold" fill="#00ff00" textLength="29" lengthAdjust="spacingAndGlyphs">ウォーム</text>
<text x="576.4" y="462.3" font-size="6" font-weight="bold" fill="#00ff00">歯</text>
<text x="597.8" y="462.3" font-size="6" font-weight="bold" fill="#00ff00">形</text>
<text x="576.4" y="469.9" font-size="6" font-weight="bold" fill="#00ff00" textLength="37.8" lengthAdjust="spacingAndGlyphs">軸方向モジュール</text>
<text x="576.4" y="477.5" font-size="6" font-weight="bold" fill="#00ff00">条</text>
<text x="597.8" y="477.5" font-size="6" font-weight="bold" fill="#00ff00">数</text>
<text x="576.4" y="485" font-size="6" font-weight="bold" fill="#00ff00" textLength="27.4" lengthAdjust="spacingAndGlyphs">ねじれ方向</text>
<text x="576.4" y="492.6" font-size="6" font-weight="bold" fill="#00ff00" textLength="36.2" lengthAdjust="spacingAndGlyphs">基準ピッチ円直径</text>
<text x="576.4" y="500.5" font-size="6" font-weight="bold" fill="#00ff00">直</text>
<text x="584.4" y="500.5" font-size="6" font-weight="bold" fill="#00ff00">径</text>
<text x="592.4" y="500.5" font-size="6" font-weight="bold" fill="#00ff00">係</text>
<text x="600.2" y="500.5" font-size="6" font-weight="bold" fill="#00ff00">数</text>
<text x="576.4" y="508.2" font-size="6" font-weight="bold" fill="#00ff00">進</text>
<text x="586.8" y="508.2" font-size="6" font-weight="bold" fill="#00ff00">み</text>
<text x="596.8" y="508.2" font-size="6" font-weight="bold" fill="#00ff00">角</text>
<text x="649.4" y="462.3" font-size="6" font-weight="bold" fill="#00ff00">種</text>
<text x="634.6" y="485" font-size="6" font-weight="bold" fill="#00ff00">右</text>
<text x="613.8" y="545" font-size="7.5" fill="#858585" textLength="28.8" lengthAdjust="spacingAndGlyphs">ウォーム</text>
<text x="571.7" y="528.5" font-size="5" fill="#707070">尺</text>
<text x="571.7" y="533.9" font-size="5" fill="#707070">度</text>
<text x="596.8" y="528.5" font-size="5" fill="#707070">日</text>
<text x="596.8" y="533.9" font-size="5" fill="#707070">付</text>
<text x="628.6" y="528.5" font-size="5" fill="#707070">図</text>
<text x="628.6" y="533.9" font-size="5" fill="#707070">番</text>
<text x="24" y="575.3" font-size="11" fill="#d4d4d4" textLength="27.3" lengthAdjust="spacingAndGlyphs">モデル</text>
<text x="136.6" y="575.3" font-size="11" fill="#c4c4c4" textLength="43" lengthAdjust="spacingAndGlyphs">レイアウト</text>
</svg>
</body></html>
